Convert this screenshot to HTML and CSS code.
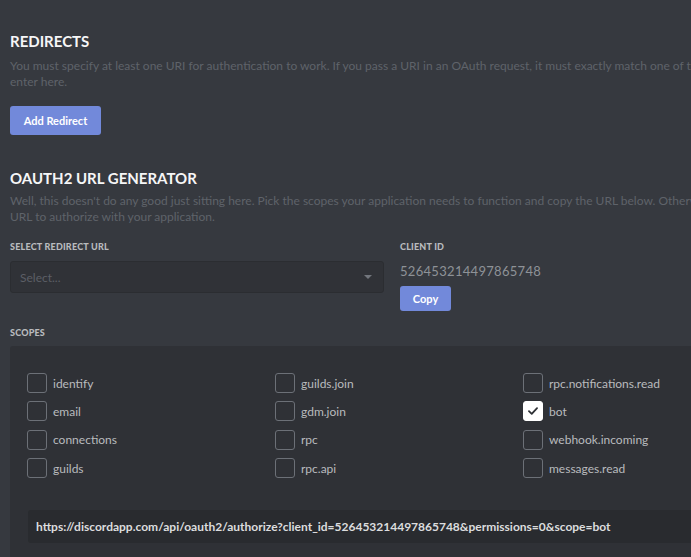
FILE: index.html
```html
<!DOCTYPE html>
<html>
<head>
<meta charset="utf-8">
<link rel="stylesheet" href="styles.css">
</head>
<body>
<div class="page">
  <section class="redirects">
    <h2 class="title">REDIRECTS</h2>
    <p class="desc">You must specify at least one URI for authentication to work. If you pass a URI in an OAuth request, it must exactly match one of the URIs you<br>enter here.</p>
    <button class="btn btn-add">Add Redirect</button>
  </section>

  <section class="generator">
    <h2 class="title">OAUTH2 URL GENERATOR</h2>
    <p class="desc">Well, this doesn't do any good just sitting here. Pick the scopes your application needs to function and copy the URL below. Otherwise, it's just a<br>URL to authorize with your application.</p>

    <div class="form-row">
      <div class="field field-select">
        <div class="label">SELECT REDIRECT URL</div>
        <div class="select">
          <span class="placeholder">Select...</span>
          <span class="arrow"></span>
        </div>
      </div>
      <div class="field field-client">
        <div class="label">CLIENT ID</div>
        <div class="client-id">526453214497865748</div>
        <button class="btn btn-copy">Copy</button>
      </div>
    </div>

    <div class="label scopes-label">SCOPES</div>
    <div class="scopes">
      <div class="scope-grid">
        <label class="scope"><span class="box"></span>identify</label>
        <label class="scope"><span class="box"></span>guilds.join</label>
        <label class="scope"><span class="box"></span>rpc.notifications.read</label>
        <label class="scope"><span class="box"></span>email</label>
        <label class="scope"><span class="box"></span>gdm.join</label>
        <label class="scope"><span class="box checked"><svg viewBox="0 0 20 20" width="20" height="20"><path d="M5.5 10.2 L8.6 13.2 L14.5 6.8" fill="none" stroke="#2f3136" stroke-width="2" stroke-linecap="round" stroke-linejoin="round"/></svg></span>bot</label>
        <label class="scope"><span class="box"></span>connections</label>
        <label class="scope"><span class="box"></span>rpc</label>
        <label class="scope"><span class="box"></span>webhook.incoming</label>
        <label class="scope"><span class="box"></span>guilds</label>
        <label class="scope"><span class="box"></span>rpc.api</label>
        <label class="scope"><span class="box"></span>messages.read</label>
      </div>
      <div class="url-box">https://discordapp.com/api/oauth2/authorize?client_id=526453214497865748&amp;permissions=0&amp;scope=bot</div>
    </div>
  </section>
</div>
</body>
</html>
```

FILE: styles.css
```css
html, body {
  margin: 0;
  padding: 0;
  background: #36393f;
  overflow: hidden;
  height: 557px;
}

.page {
  width: 800px;
  padding: 31px 0 0 10px;
  font-family: Lato, "Open Sans", sans-serif;
  color: #dcddde;
}

.title {
  margin: 0;
  font-size: 15px;
  line-height: 20px;
  font-weight: 700;
  color: #f6f6f7;
  letter-spacing: 0;
}

.desc {
  margin: 7px 0 0;
  font-size: 12px;
  line-height: 16px;
  color: #5f636a;
  white-space: nowrap;
}

.btn {
  border: 0;
  border-radius: 3px;
  background: #7289da;
  color: #ffffff;
  font-family: Lato, "Open Sans", sans-serif;
  font-size: 11px;
  font-weight: 700;
  padding: 0;
  display: block;
}

.btn-add {
  margin-top: 16px;
  width: 91px;
  height: 29px;
}

.generator {
  margin-top: 33px;
}

.generator .desc {
  margin-top: 5px;
}

.form-row {
  display: flex;
  margin-top: 16px;
  gap: 16px;
}

.field-select {
  width: 374px;
}

.label {
  font-size: 9px;
  line-height: 12px;
  font-weight: 900;
  color: #b9bbbe;
  letter-spacing: 0.2px;
}

.select {
  margin-top: 8px;
  height: 32px;
  box-sizing: border-box;
  background: #303237;
  border: 1px solid #2b2d31;
  border-radius: 3px;
  display: flex;
  align-items: center;
  justify-content: space-between;
  padding: 0 11px 0 9px;
}

.placeholder {
  font-size: 12px;
  color: #5c5f66;
}

.arrow {
  width: 0;
  height: 0;
  border-left: 4px solid transparent;
  border-right: 4px solid transparent;
  border-top: 4px solid #72767d;
}

.client-id {
  margin-top: 10px;
  font-size: 13px;
  line-height: 16px;
  color: #8e9297;
  letter-spacing: 0.3px;
}

.btn-copy {
  margin-top: 7px;
  width: 51px;
  height: 25px;
  font-size: 11px;
}

.scopes-label {
  margin-top: 16px;
}

.scopes {
  margin-top: 7px;
  background: #2f3136;
  border-radius: 3px 0 0 0;
  padding: 27px 0 40px 17px;
}

.scope-grid {
  display: grid;
  grid-template-columns: 248px 248px 248px;
  row-gap: 8.4px;
}

.scope {
  display: flex;
  align-items: center;
  gap: 6px;
  height: 20px;
  font-size: 12px;
  color: #b9bbbe;
}

.box {
  width: 20px;
  height: 20px;
  box-sizing: border-box;
  border: 1px solid #6c7077;
  border-radius: 3px;
  flex: none;
  display: flex;
  align-items: center;
  justify-content: center;
}

.box.checked {
  background: #ffffff;
  border-color: #ffffff;
}

.box svg {
  display: block;
}

.url-box {
  margin-top: 32px;
  margin-left: 1px;
  height: 33px;
  box-sizing: border-box;
  background: #292b2f;
  border-radius: 3px 0 0 3px;
  padding: 0 8px;
  display: flex;
  align-items: center;
  font-size: 12px;
  font-weight: 700;
  color: #dcddde;
  white-space: nowrap;
}
```
